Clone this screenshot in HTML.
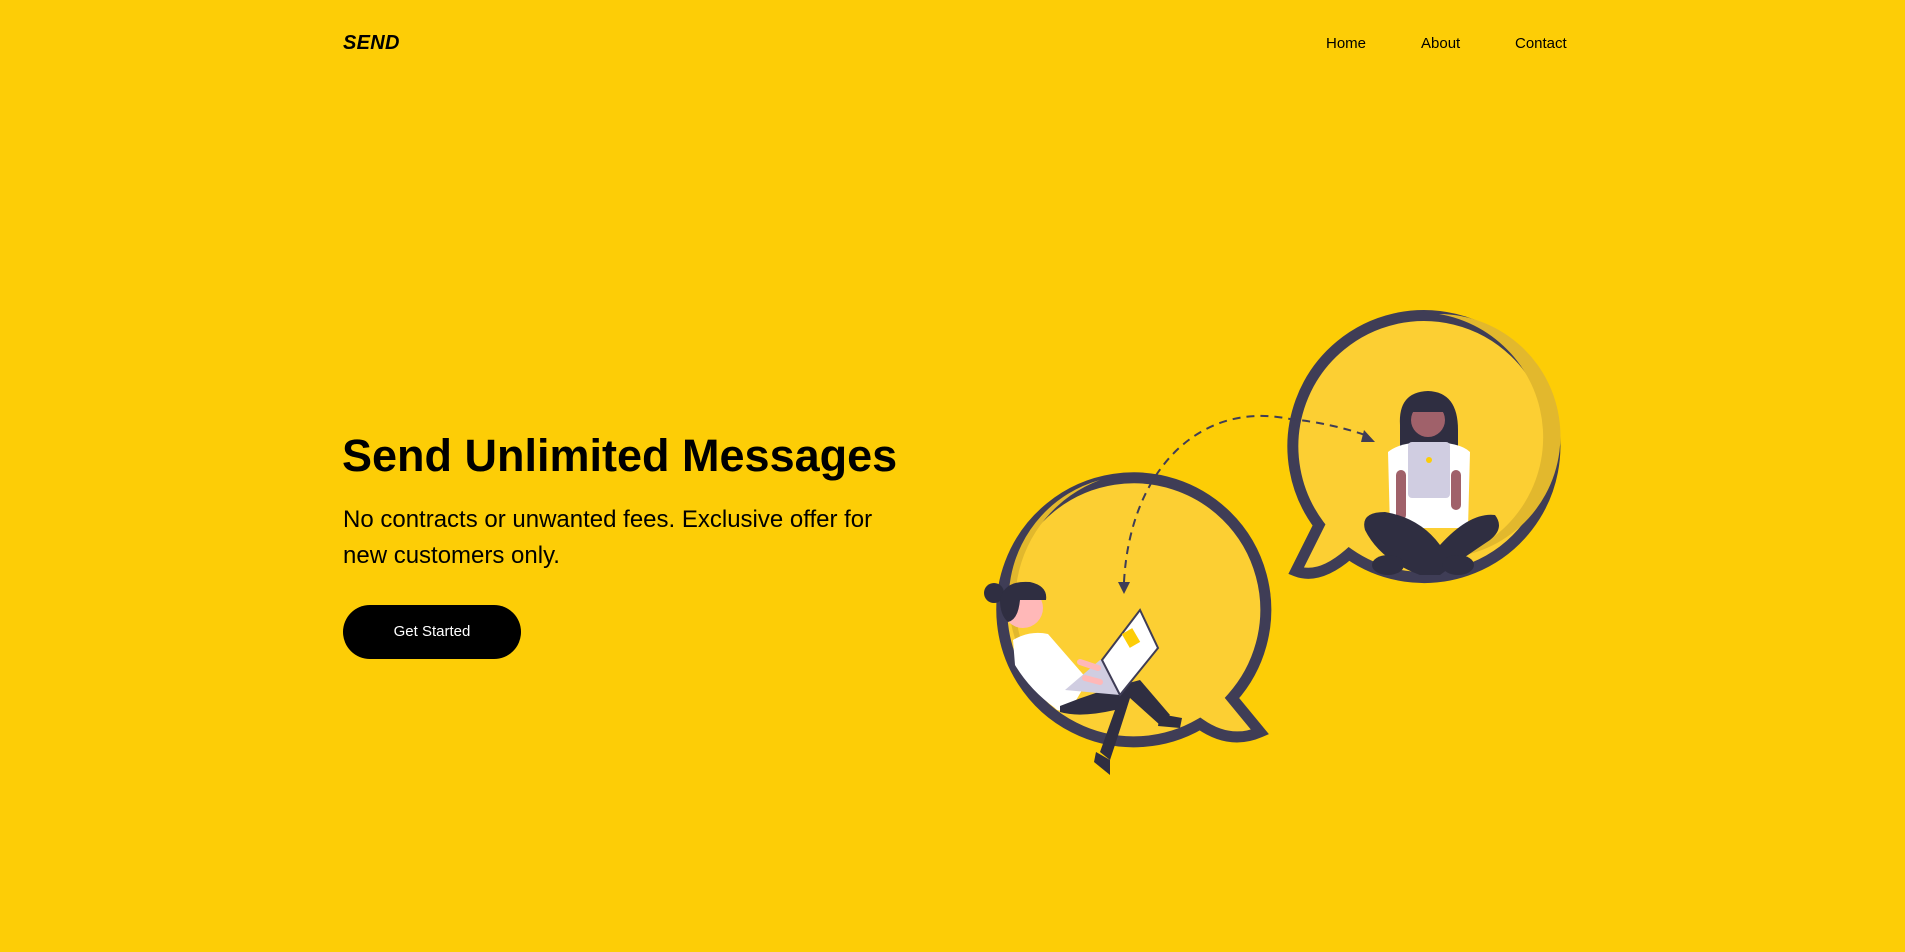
<!DOCTYPE html>
<html><head><meta charset="utf-8"><style>
html,body{margin:0;padding:0;}
body{width:1905px;height:952px;background:#fdcd06;position:relative;overflow:hidden;font-family:"Liberation Sans",sans-serif;color:#000;}
.logo{position:absolute;left:343px;top:32px;font-weight:bold;font-style:italic;font-size:20px;letter-spacing:0.3px;}
.nav a{position:absolute;top:35px;font-size:15px;color:#000;text-decoration:none;}
h1{position:absolute;left:342px;top:428px;margin:0;font-size:45px;font-weight:bold;line-height:56px;white-space:nowrap;}
p{position:absolute;left:343px;top:502px;margin:0;font-size:24px;line-height:36px;width:560px;}
.btn{position:absolute;left:343px;top:605px;width:178px;height:54px;border-radius:27px;background:#000;color:#fff;font-size:15px;line-height:54px;text-align:center;}
svg{position:absolute;left:0;top:0;}
</style></head><body>
<div class="logo">SEND</div>
<div class="nav"><a style="left:1326px">Home</a><a style="left:1421px">About</a><a style="left:1515px">Contact</a></div>
<h1>Send Unlimited Messages</h1>
<p>No contracts or unwanted fees. Exclusive offer for new customers only.</p>
<div class="btn">Get Started</div>
<svg width="1905" height="952" viewBox="0 0 1905 952">
 <g transform="translate(-16,-10)">
 <path d="M1335 535 A131 131 0 1 1 1365 564 Q1335 590 1312 581 Z" fill="#fccf33" stroke="#3f3d56" stroke-width="11" stroke-linejoin="miter"/>
 <path d="M1455 324 A125 125 0 0 1 1470 567 A122 122 0 0 0 1455 324Z" fill="#e2b82d"/>
 </g>
 <path d="M1400 425 Q1398 392 1428 391 Q1458 392 1458 430 L1458 455 L1400 455Z" fill="#2f2e41"/>
 <circle cx="1428" cy="420" r="17" fill="#a0616a"/>
 <path d="M1410 400 L1446 400 L1446 412 L1410 412Z" fill="#2f2e41"/>
 <path d="M1388 452 Q1400 442 1428 442 Q1460 442 1470 452 L1468 528 L1390 528Z" fill="#fff"/>
 <rect x="1408" y="442" width="42" height="56" rx="4" fill="#d0cde1"/>
 <circle cx="1429" cy="460" r="3" fill="#fdcd06"/>
 <rect x="1396" y="470" width="10" height="50" rx="5" fill="#a0616a"/>
 <rect x="1451" y="470" width="10" height="40" rx="5" fill="#a0616a"/>
 <path d="M1365 530 Q1360 512 1385 512 Q1420 518 1440 545 Q1470 512 1495 515 Q1505 528 1490 540 Q1460 560 1440 575 L1420 575 Q1380 560 1365 530Z" fill="#2f2e41"/>
 <ellipse cx="1388" cy="565" rx="16" ry="10" fill="#2f2e41"/>
 <ellipse cx="1458" cy="565" rx="16" ry="10" fill="#2f2e41"/>
 <path d="M1232 698 A132 132 0 1 0 1200 724 Q1230 745 1260 732 Z" fill="#fccf33" stroke="#3f3d56" stroke-width="11"/>
 <path d="M1100 480 A124 124 0 0 0 1060 700 A130 130 0 0 1 1100 480Z" fill="#e2b82d"/>
 <path d="M1124 582 C1130 470 1200 400 1290 419 C1320 422 1345 428 1368 436" fill="none" stroke="#3f3d56" stroke-width="2" stroke-dasharray="8 6"/>
 <path d="M1364 430 L1375 442 L1361 442Z" fill="#3f3d56"/>
 <path d="M1118 582 L1130 582 L1124 594Z" fill="#3f3d56"/>
 <circle cx="994" cy="593" r="10" fill="#2f2e41"/>
 <circle cx="1023" cy="608" r="20" fill="#ffb8b8"/>
 <path d="M1000 600 Q1004 580 1030 582 Q1048 586 1046 600 L1020 600 Q1018 620 1008 622 Q1000 615 1000 600Z" fill="#2f2e41"/>
 <path d="M1013 640 Q1030 630 1048 634 L1088 680 L1075 702 Q1060 715 1055 708 Q1030 690 1015 665Z" fill="#fff"/>
 <path d="M1060 706 Q1100 690 1140 680 L1170 715 L1160 725 L1130 698 Q1120 730 1110 760 L1100 752 L1115 710 Q1080 718 1060 712Z" fill="#2f2e41"/>
 <path d="M1160 714 L1182 718 L1180 728 L1158 726Z" fill="#2f2e41"/>
 <path d="M1096 752 L1110 760 L1110 775 L1094 762Z" fill="#2f2e41"/>
 <path d="M1065 690 L1100 660 L1150 655 L1120 695 Z" fill="#d0cde1"/>
 <path d="M1102 660 L1140 610 L1158 648 L1120 695Z" fill="#fff" stroke="#3f3d56" stroke-width="2"/>
 <rect x="1125" y="630" width="12" height="16" fill="#fdcd06" transform="rotate(-30 1131 638)"/>
 <path d="M1080 662 L1098 668 M1085 678 L1100 682" stroke="#ffb8b8" stroke-width="6" stroke-linecap="round"/>
</svg>
</body></html>
